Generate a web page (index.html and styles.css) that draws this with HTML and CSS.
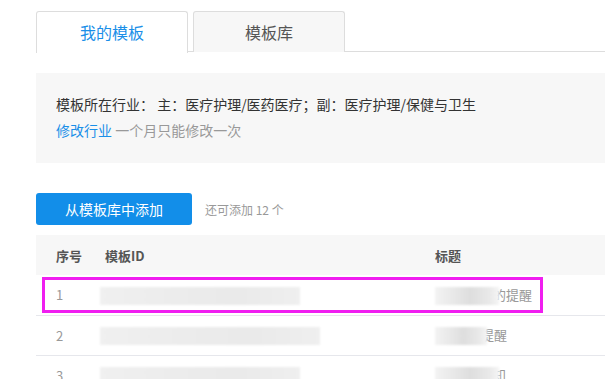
FILE: index.html
```html
<!DOCTYPE html>
<html lang="zh-CN">
<head>
  <meta charset="UTF-8" />
  <title>模板消息 - 我的模板</title>
  <link rel="stylesheet" href="styles.css">
</head>
<body>

  <div class="page">
    <!-- Tabs -->
    <div class="tabs">
      <a class="tab active" href="#">我的模板</a>
      <a class="tab" href="#">模板库</a>
    </div>

    <!-- Industry info -->
    <div class="industry">
      <p>模板所在行业： 主：医疗护理/医药医疗；副：医疗护理/保健与卫生</p>
      <p><a href="#">修改行业</a> <span class="muted">一个月只能修改一次</span></p>
    </div>

    <div class="actions">
      <button class="btn-primary">从模板库中添加</button>
      <span class="hint">还可添加 12 个</span>
    </div>

    <div class="table-wrapper">
      <table>
        <thead>
          <tr>
            <th class="col-no">序号</th>
            <th class="col-id">模板ID</th>
            <th>标题</th>
          </tr>
        </thead>
        <tbody>
          <tr>
            <td class="col-no">1</td>
            <td class="col-id"><span class="mask mask-id"></span></td>
            <td><span class="mask mask-title" style="width:64px"></span>的提醒</td>
          </tr>
          <tr>
            <td class="col-no">2</td>
            <td class="col-id"><span class="mask mask-id" style="width:220px"></span></td>
            <td><span class="mask mask-title" style="width:52px"></span>提醒</td>
          </tr>
          <tr>
            <td class="col-no">3</td>
            <td class="col-id"><span class="mask mask-id"></span></td>
            <td><span class="mask mask-title" style="width:64px"></span>知</td>
          </tr>
        </tbody>
      </table>
      <!-- highlight annotation -->
      <div class="highlight"></div>
    </div>
  </div>

</body>
</html>
```

FILE: styles.css
```css
* { box-sizing: border-box; margin: 0; padding: 0; }

body {
  font-family: "Noto Sans CJK SC", "Noto Sans", sans-serif;
  background: #fff;
  color: #333;
  overflow: hidden;
}

.page {
  padding: 11px 0 0 36px;
}

.tabs {
  display: flex;
  gap: 5px;
  border-bottom: 1px solid #ddd;
  height: 41px;
}

.tab {
  width: 152px;
  height: 41px;
  border: 1px solid #ddd;
  border-bottom: none;
  border-radius: 3px 3px 0 0;
  background: #f7f7f7;
  color: #555;
  font-size: 16px;
  line-height: 40px;
  text-align: center;
  text-decoration: none;
}

.tab.active {
  height: 42px;
  background: #fff;
  color: #1a8fe8;
}

.industry {
  margin-top: 21px;
  background: #f7f7f7;
  padding: 18px 20px 20px;
  font-size: 14px;
  line-height: 26px;
}

.industry a {
  color: #1a8fe8;
  text-decoration: none;
}

.muted { color: #999; }

.actions {
  display: flex;
  align-items: center;
  gap: 13px;
  margin-top: 30px;
}

.btn-primary {
  width: 156px;
  height: 32px;
  border: none;
  border-radius: 3px;
  background: #128ee9;
  color: #fff;
  font-family: inherit;
  font-size: 14px;
  cursor: pointer;
}

.hint {
  font-size: 12px;
  color: #999;
}

.table-wrapper {
  position: relative;
  margin-top: 10px;
}

table {
  width: 100%;
  border-collapse: collapse;
  font-size: 13px;
}

thead {
  background: #f7f7f7;
}

th, td {
  height: 40px;
  padding: 0;
  text-align: left;
  white-space: nowrap;
}

th {
  color: #555;
  font-weight: bold;
}

td {
  color: #999;
  border-bottom: 1px solid #e6e7ec;
}

.col-no { width: 69px; padding-left: 20px; }
.col-id { width: 330px; }

.mask {
  display: inline-block;
  vertical-align: middle;
  height: 18px;
  filter: blur(1px);
  position: relative;
  z-index: 1;
}

.mask-id {
  width: 200px;
  margin-left: -5px;
  background: linear-gradient(90deg, #f0f0f0, #ececec 40%, #eaeaea 70%, #efefef);
}

.mask-title {
  margin-right: -6px;
  background: linear-gradient(90deg, #f3f3f3, #e8e8e8 30%, #dedede 55%, #e9e9e9 85%, #f5f5f5);
}

.highlight {
  position: absolute;
  left: 6px;
  top: 42px;
  width: 501px;
  height: 36px;
  border: 3px solid #f01ef0;
  pointer-events: none;
}
```
